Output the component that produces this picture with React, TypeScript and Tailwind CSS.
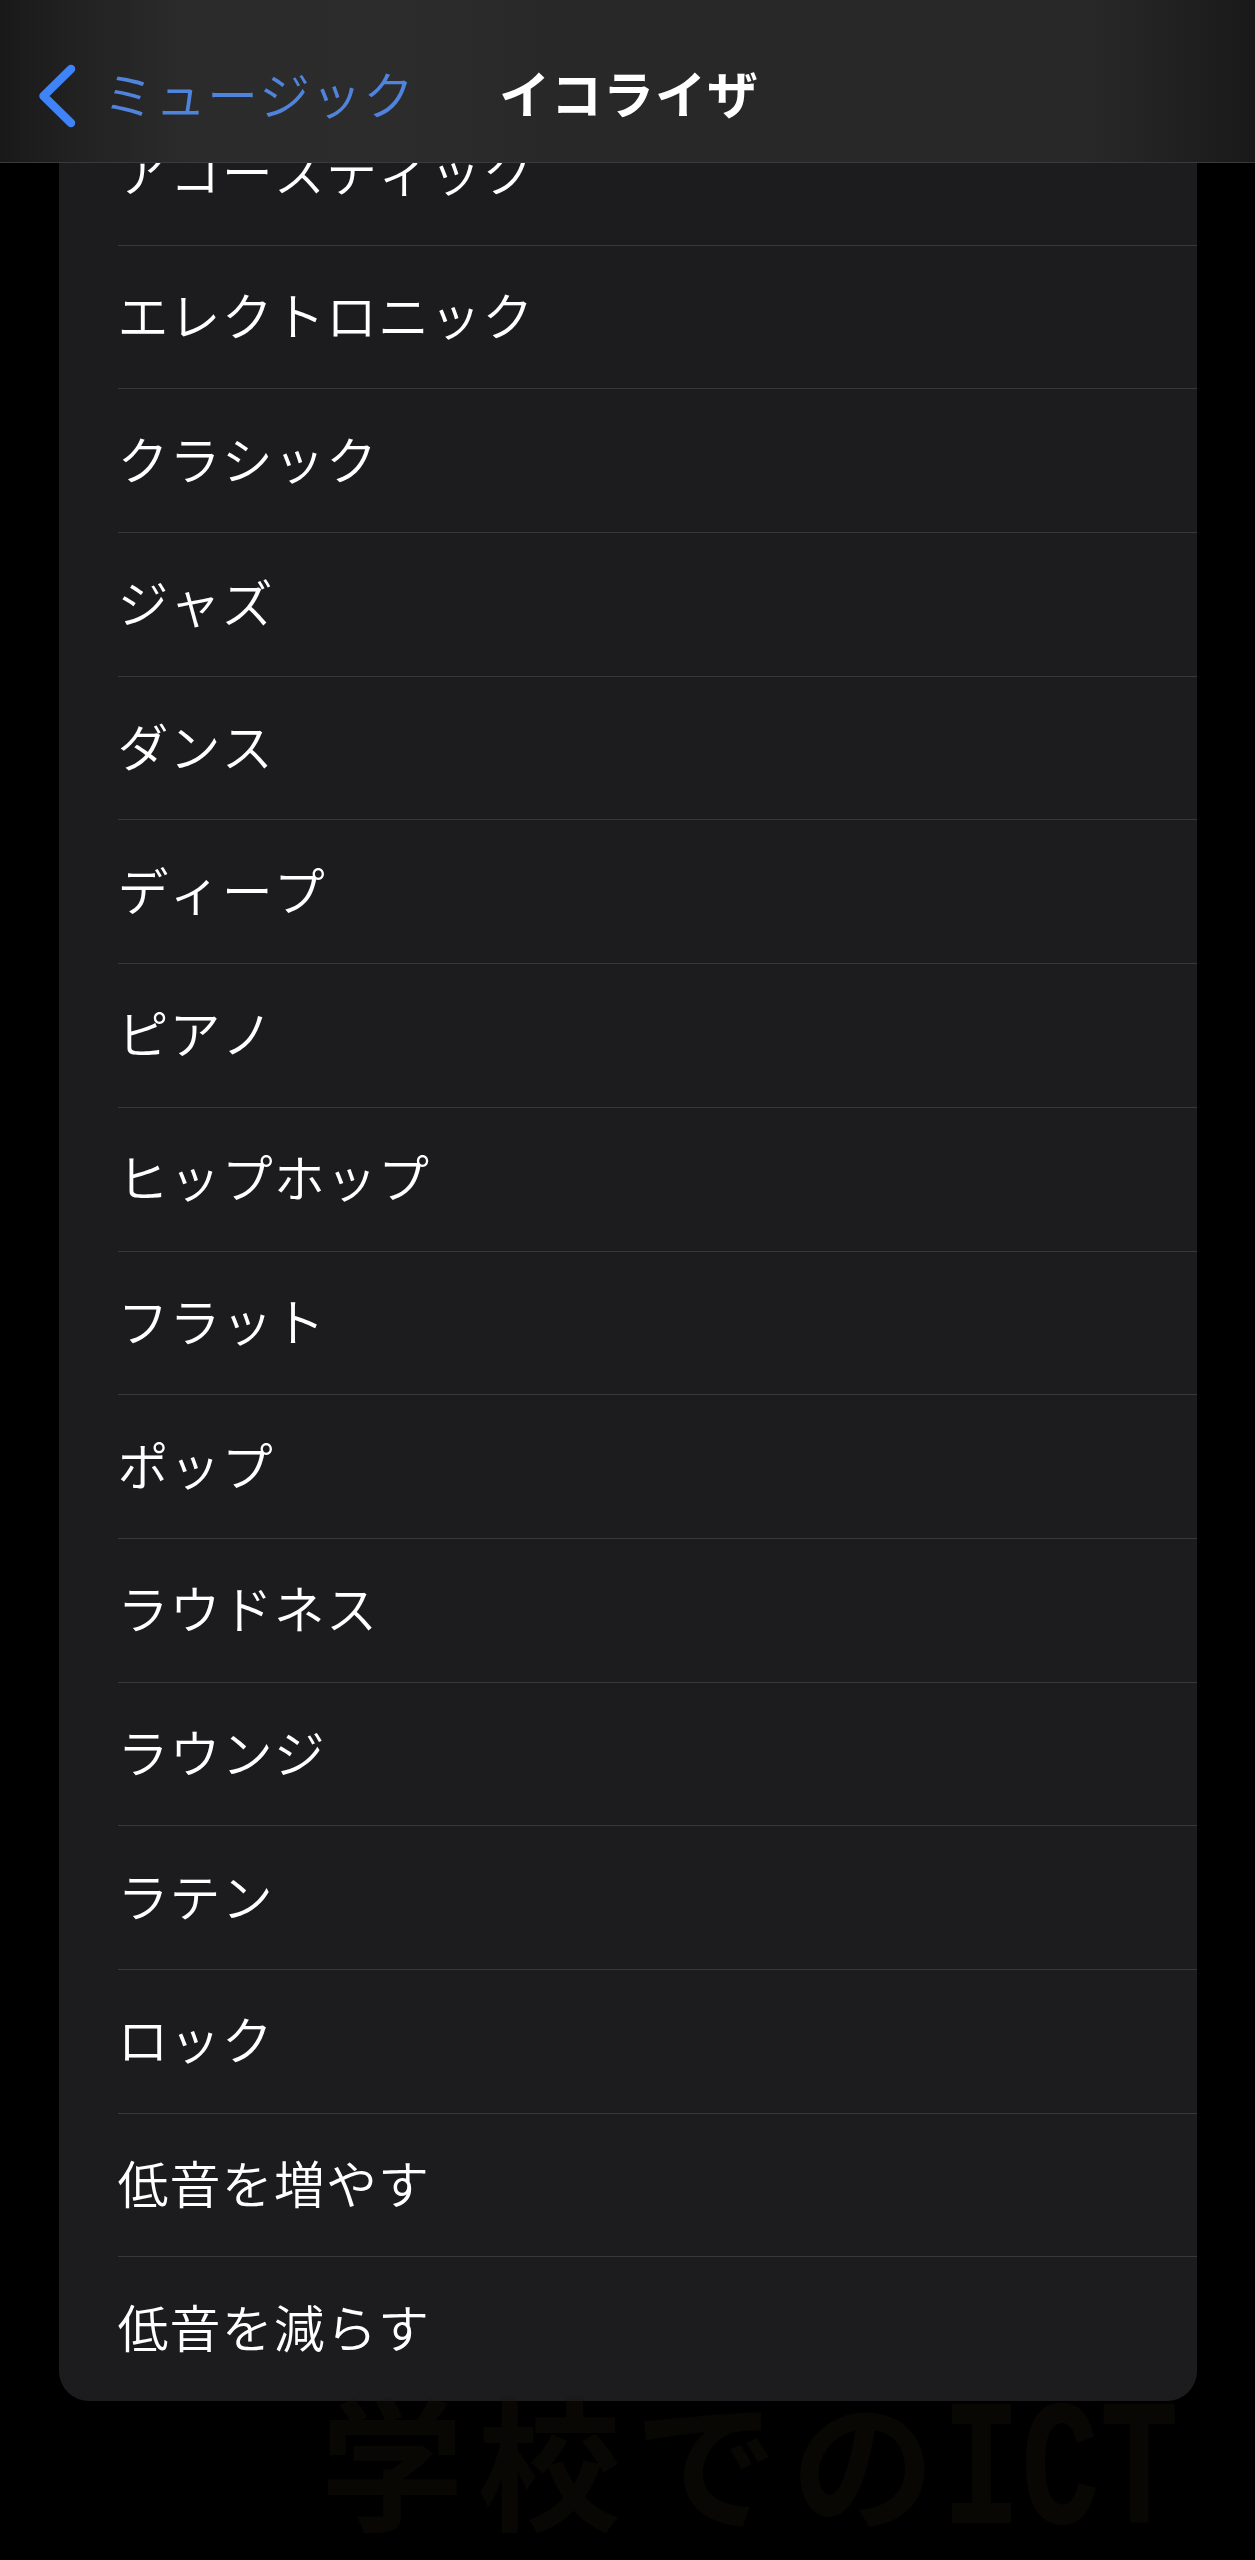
const presets = [
  "アコースティック",
  "エレクトロニック",
  "クラシック",
  "ジャズ",
  "ダンス",
  "ディープ",
  "ピアノ",
  "ヒップホップ",
  "フラット",
  "ポップ",
  "ラウドネス",
  "ラウンジ",
  "ラテン",
  "ロック",
  "低音を増やす",
  "低音を減らす",
];

export default function App() {
  return (
    <div className="relative h-[2560px] w-[1255px] bg-black font-['Noto_Sans_CJK_JP',sans-serif] text-[51px] leading-none [font-kerning:none]">
      <NavBar />
      <PresetList />
      <Watermark />
    </div>
  );
}

const NavBar = () => {
  return (
    <header className="relative z-10 flex h-[163px] items-start border-b border-[#3a3a3c] bg-[linear-gradient(90deg,#191919_0px,#222222_80px,#2b2b2b_190px,#2c2c2c_400px,#282828_560px,#282828_1090px,#202020_1180px,#191919_1255px)] pt-[64px]">
      <button className="flex w-[499px] items-center pl-[36px] text-[#4f83dc]">
        <BackChevron />
        <span className="-mt-[5px] ml-[25px] font-[350] tracking-[1px]">ミュージック</span>
      </button>
      <h1 className="pt-[3px] font-bold tracking-[1px] text-white">イコライザ</h1>
    </header>
  );
};

const PresetList = () => {
  return (
    // first row is scrolled halfway under the nav bar
    <ul className="mr-[58.5px] ml-[58.5px] -mt-[61px] rounded-b-[30px] bg-[#1c1c1e] pl-[59px]">
      {presets.map((name) => (
        <Preset key={name} name={name} />
      ))}
    </ul>
  );
};

const Preset = (props: { name: string }) => {
  return (
    <li className="flex h-[143.7px] items-center border-b border-[#38383a] pb-[5px] font-[350] tracking-[1.1px] text-white last:border-b-0">
      {props.name}
    </li>
  );
};

const BackChevron = () => {
  return (
    <svg
      width="42"
      height="64"
      viewBox="0 0 42 64"
      fill="none"
      stroke="#3f83f8"
      strokeWidth="8.5"
      strokeLinecap="round"
      strokeLinejoin="round"
    >
      <path d="M35 5 L7.5 32 L35 59" />
    </svg>
  );
};

const Watermark = () => {
  return (
    <div className="pointer-events-none absolute top-[2382px] left-[320px] flex items-baseline font-bold whitespace-nowrap text-[#1c180c]/30">
      <span className="text-[144px] tracking-[13px]">学校での</span>
      <span className="-ml-[6px] w-[237px]">
        <span className="inline-block origin-left translate-y-[3px] scale-x-73 font-['Liberation_Mono',monospace] text-[180px]">
          ICT
        </span>
      </span>
    </div>
  );
};
